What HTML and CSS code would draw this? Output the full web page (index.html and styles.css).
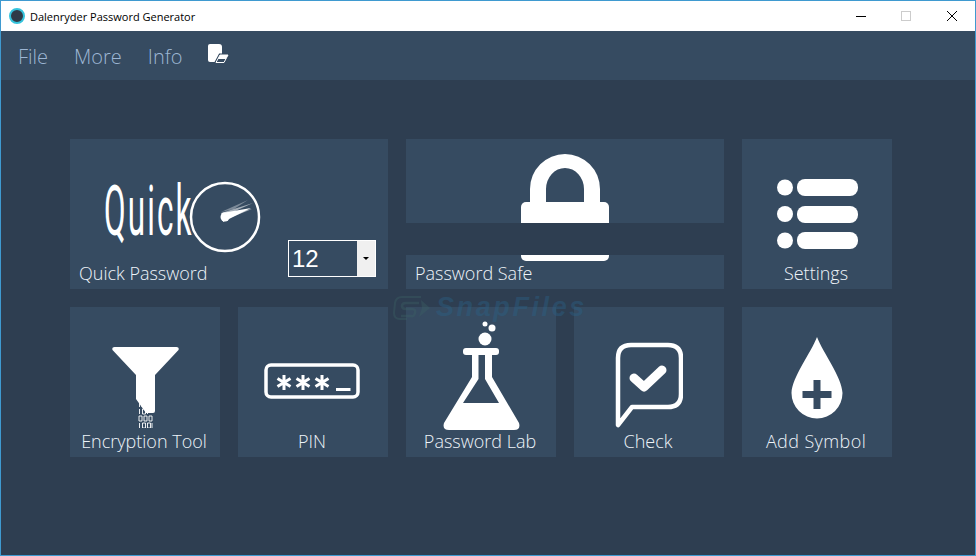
FILE: index.html
```html
<!DOCTYPE html>
<html lang="en">
<head>
  <meta charset="UTF-8">
  <title>Dalenryder Password Generator</title>
  <link rel="stylesheet" href="styles.css">
</head>
<body>
  <div class="window">
    <header class="titlebar">
      <span class="app-icon"></span>
      <span class="app-title">Dalenryder Password Generator</span>
      <div class="controls">
        <svg width="128" height="30" viewBox="0 0 128 30">
          <path d="M9 15.5h10" stroke="#000" fill="none"/>
          <rect x="54.5" y="10.5" width="9" height="9" stroke="#ccc" fill="none"/>
          <path d="M100 10l10 10M110 10l-10 10" stroke="#000" fill="none"/>
        </svg>
      </div>
    </header>

    <nav class="menubar">
      <a class="menu-item">File</a>
      <a class="menu-item">More</a>
      <a class="menu-item">Info</a>
      <svg class="note-icon" width="21" height="20" viewBox="0 0 21 20">
        <path d="M2 0h9q3 0 3 3v13q0 2-2 2H2q-2 0-2-2V2q0-2 2-2z" fill="#fff"/>
        <path d="M12 11h8l-4 7.500H8z" fill="#364b61" stroke="#364b61" stroke-width="3"/>
        <path d="M12 11h8l-4 7.500H8z" fill="none" stroke="#fff" stroke-width="1"/>
        <path d="M12 11h8l-2.200 4h-8z" fill="#fff"/>
      </svg>
    </nav>

    <main class="main">
      <div class="grid">
        <div class="tile tile-wide tile-quick">
          <svg class="icon icon-quick" width="200" height="90" viewBox="0 -18 200 90">
            <text class="quick-word" transform="translate(0 54) scale(.45 1)">Quick</text>
            <circle cx="121" cy="36" r="34" fill="none" stroke="#fff" stroke-width="2.500"/>
            <path d="M117 32l32-10-20 9 19-3-30 12z" fill="#fff" opacity=".55"/>
            <path d="M118 32l29-5-28 14z" fill="#fff"/>
            <path d="M117 31l27-12-14 9z" fill="#fff" opacity=".35"/>
            <circle cx="121" cy="36" r="4.500" fill="#fff"/>
          </svg>
          <div class="tile-foot">
            <span class="label">Quick Password</span>
            <div class="num-select">
              <span class="num-value">12</span>
              <span class="num-arrow"></span>
            </div>
          </div>
        </div>

        <div class="tile tile-wide">
          <svg class="icon icon-lock" width="88" height="107" viewBox="0 0 88 107">
            <path d="M9 50V35a35 35 0 0 1 70 0v15H63V35a19 21 0 0 0-38 0v15z" fill="#fff"/>
            <rect x="0" y="48" width="88" height="59" rx="5" fill="#fff"/>
          </svg>
          <div class="safe-band"></div>
          <span class="label label-left">Password Safe</span>
        </div>

        <div class="tile">
          <svg class="icon icon-settings" width="81" height="70" viewBox="0 0 81 70">
            <g fill="#fff">
              <circle cx="8" cy="8.500" r="8"/>
              <rect x="20" y="0" width="61" height="17" rx="8"/>
              <circle cx="8" cy="35" r="8"/>
              <rect x="20" y="27" width="61" height="17" rx="8"/>
              <circle cx="8" cy="61.500" r="8"/>
              <rect x="20" y="53" width="61" height="17" rx="8"/>
            </g>
          </svg>
          <span class="label">Settings</span>
        </div>

        <div class="tile">
          <svg class="icon icon-funnel" width="67" height="81" viewBox="0 0 67 81">
            <path d="M2.500 0h62q3 0 2 3L43 28v36q0 2-2 2h-7L24 52V28L.5 3q-1-3 2-3z" fill="#fff"/>
            <g fill="none" stroke="#fff" stroke-width=".9">
              <path d="M27.500 55v5M30 56v4M27.500 62v5M30.500 62h3v5h-3zM35.500 62v5M27 69h3v5h-3zM32 69h3v5h-3zM37 69h3v5h-3zM27.500 76v5M30.500 76h3v5h-3zM35.500 76h3v5h-3zM40 76v5"/>
            </g>
          </svg>
          <span class="label">Encryption Tool</span>
        </div>

        <div class="tile">
          <svg class="icon icon-pin" width="96" height="36" viewBox="0 0 96 36">
            <rect x="2" y="2" width="92" height="32" rx="5" fill="none" stroke="#fff" stroke-width="3.500"/>
            <g stroke="#fff" stroke-width="3" fill="none">
              <path d="M20 12v15M13.500 15.500l13 8M26.500 15.500l-13 8"/>
              <path d="M39 12v15M32.500 15.500l13 8M45.500 15.500l-13 8"/>
              <path d="M58 12v15M51.500 15.500l13 8M64.500 15.500l-13 8"/>
              <path d="M72 26.500h14.500"/>
            </g>
          </svg>
          <span class="label">PIN</span>
        </div>

        <div class="tile">
          <svg class="icon icon-flask" width="80" height="110" viewBox="0 0 80 110">
            <g fill="#fff">
              <circle cx="44" cy="19" r="6.500"/>
              <circle cx="51" cy="8" r="3.500"/>
              <circle cx="44" cy="4" r="2.500"/>
              <rect x="22" y="28" width="36" height="7" rx="3"/>
              <path fill-rule="evenodd" d="M31 34h6.500v25L22 83h36L44 59V34h7v23l27 46q2 7-5 7H8q-7 0-5-7l28-46z"/>
            </g>
          </svg>
          <span class="label">Password Lab</span>
        </div>

        <div class="tile">
          <svg class="icon icon-check" width="68" height="88" viewBox="0 0 68 88">
            <path d="M3 83V16Q3 3 16 3h37q13 0 13 13v36q0 13-13 13H17z" fill="none" stroke="#fff" stroke-width="4.500" stroke-linejoin="round" stroke-linecap="round"/>
            <path d="M19 36l10 9 18-17" fill="none" stroke="#fff" stroke-width="9" stroke-linecap="round" stroke-linejoin="round"/>
          </svg>
          <span class="label">Check</span>
        </div>

        <div class="tile">
          <svg class="icon icon-drop" width="52" height="82" viewBox="0 0 52 82">
            <path d="M26 0C20 16 1 40 .5 56a25.500 25.500 0 0 0 51 0C51 40 32 16 26 0z" fill="#fff"/>
            <path d="M22.500 43h7v11h11v7h-11v11h-7V61h-11v-7h11z" fill="#364b61"/>
          </svg>
          <span class="label label-symbol">Add Symbol</span>
        </div>
      </div>
    </main>

    <div class="watermark">
      <svg width="38" height="26" viewBox="0 0 38 26">
        <path d="M28 2H9Q3 2 2 8L1 18Q1 24 7 24H14" fill="none" stroke="#3b6064" stroke-width="2"/>
        <path d="M26 8H13Q9 8 9 11T13 14H19Q23 14 22 18T18 21H8" fill="none" stroke="#3b6064" stroke-width="2.500"/>
        <path d="M28 5l9 8-11 9 3-9z" fill="#3b6064"/>
      </svg>
      <span class="watermark-text">SnapFiles</span>
    </div>
  </div>
</body>
</html>
```

FILE: styles.css
```css
:root {
  --page-bg: #2e3e51;
  --tile-bg: #364b61;
  --border-blue: #3f9ad0;
  --label-color: #eef4fa;
  --menu-color: #9db6d3;
}

* {
  margin: 0;
  padding: 0;
  box-sizing: border-box;
}

body {
  font-family: 'Open Sans', 'Noto Sans', sans-serif;
  background-color: var(--page-bg);
}

.window {
  position: relative;
  width: 976px;
  height: 556px;
  border: 1px solid var(--border-blue);
  background-color: var(--page-bg);
  overflow: hidden;
}

.titlebar {
  display: flex;
  align-items: center;
  height: 30px;
  padding-left: 8px;
  background-color: #fff;
}

.app-icon {
  width: 16px;
  height: 16px;
  border-radius: 50%;
  background-color: #2f3b48;
  border: 2.5px solid #35c3dc;
}

.app-title {
  margin-left: 5px;
  font-size: 11px;
  color: #000;
}

.controls {
  margin-left: auto;
  height: 30px;
  width: 128px;
}

.controls svg {
  display: block;
}

.menubar {
  display: flex;
  align-items: center;
  height: 49px;
  padding: 1px 0 0 17px;
  background-color: var(--tile-bg);
}

.menu-item {
  margin-right: 26px;
  font-size: 20px;
  font-weight: 300;
  color: var(--menu-color);
}

.note-icon {
  margin-top: -4px;
}

.main {
  padding: 59px 0 0 69px;
}

.grid {
  display: grid;
  grid-template-columns: repeat(5, 150px);
  grid-auto-rows: 150px;
  gap: 18px;
}

.tile {
  position: relative;
  display: flex;
  flex-direction: column;
  align-items: center;
  background-color: var(--tile-bg);
}

.tile-wide {
  grid-column: span 2;
}

.tile-quick {
  align-items: flex-start;
}

.icon {
  display: block;
  flex: none;
}

.label {
  margin-top: auto;
  margin-right: 2px;
  padding-bottom: 4px;
  font-size: 18px;
  font-weight: 300;
  line-height: 24px;
  color: var(--label-color);
}

.label-left {
  align-self: flex-start;
  margin-left: 9px;
}

.label-symbol {
  letter-spacing: 0.4px;
}

.icon-quick { margin: 24px 0 0 34px; }
.icon-lock { margin-top: 15px; }
.icon-settings { margin-top: 40px; }
.icon-funnel { margin-top: 40px; }
.icon-pin { margin: 56px 0 0 -3px; }
.icon-flask { margin: 13px 0 -4px -1px; }
.icon-check { margin: 35px 0 -3px; }
.icon-drop { margin-top: 30px; }

.quick-word {
  font-family: 'Roboto', sans-serif;
  font-size: 70px;
  font-weight: 400;
  letter-spacing: 4.6px;
  fill: #fff;
}

.tile-foot {
  display: flex;
  align-items: flex-end;
  justify-content: space-between;
  width: 100%;
  height: 28px;
  margin-top: auto;
  padding: 0 12px 0 9px;
}

.num-select {
  display: flex;
  flex: none;
  width: 88px;
  height: 37px;
  margin-bottom: 12px;
  border: 1px solid #fff;
}

.num-value {
  flex: 1;
  padding-left: 3px;
  font-family: 'Liberation Sans', Arial, sans-serif;
  font-size: 24px;
  line-height: 35px;
  color: #fff;
}

.num-arrow {
  display: flex;
  align-items: center;
  justify-content: center;
  width: 18px;
  background-color: #f0f0f0;
}

.num-arrow::after {
  content: "";
  border-left: 3px solid transparent;
  border-right: 3px solid transparent;
  border-top: 3px solid #000;
}

/* the dark strip runs over the lock */
.safe-band {
  position: absolute;
  left: 0;
  right: 0;
  top: 84px;
  height: 32px;
  background-color: var(--page-bg);
}

.watermark {
  position: absolute;
  left: 392px;
  top: 291px;
  display: flex;
  align-items: center;
  gap: 5px;
  opacity: 0.4;
}

.watermark-text {
  font-family: 'Liberation Sans', Arial, sans-serif;
  font-size: 27px;
  font-weight: 700;
  font-style: italic;
  letter-spacing: 2.6px;
  color: #2a6288;
}
```
